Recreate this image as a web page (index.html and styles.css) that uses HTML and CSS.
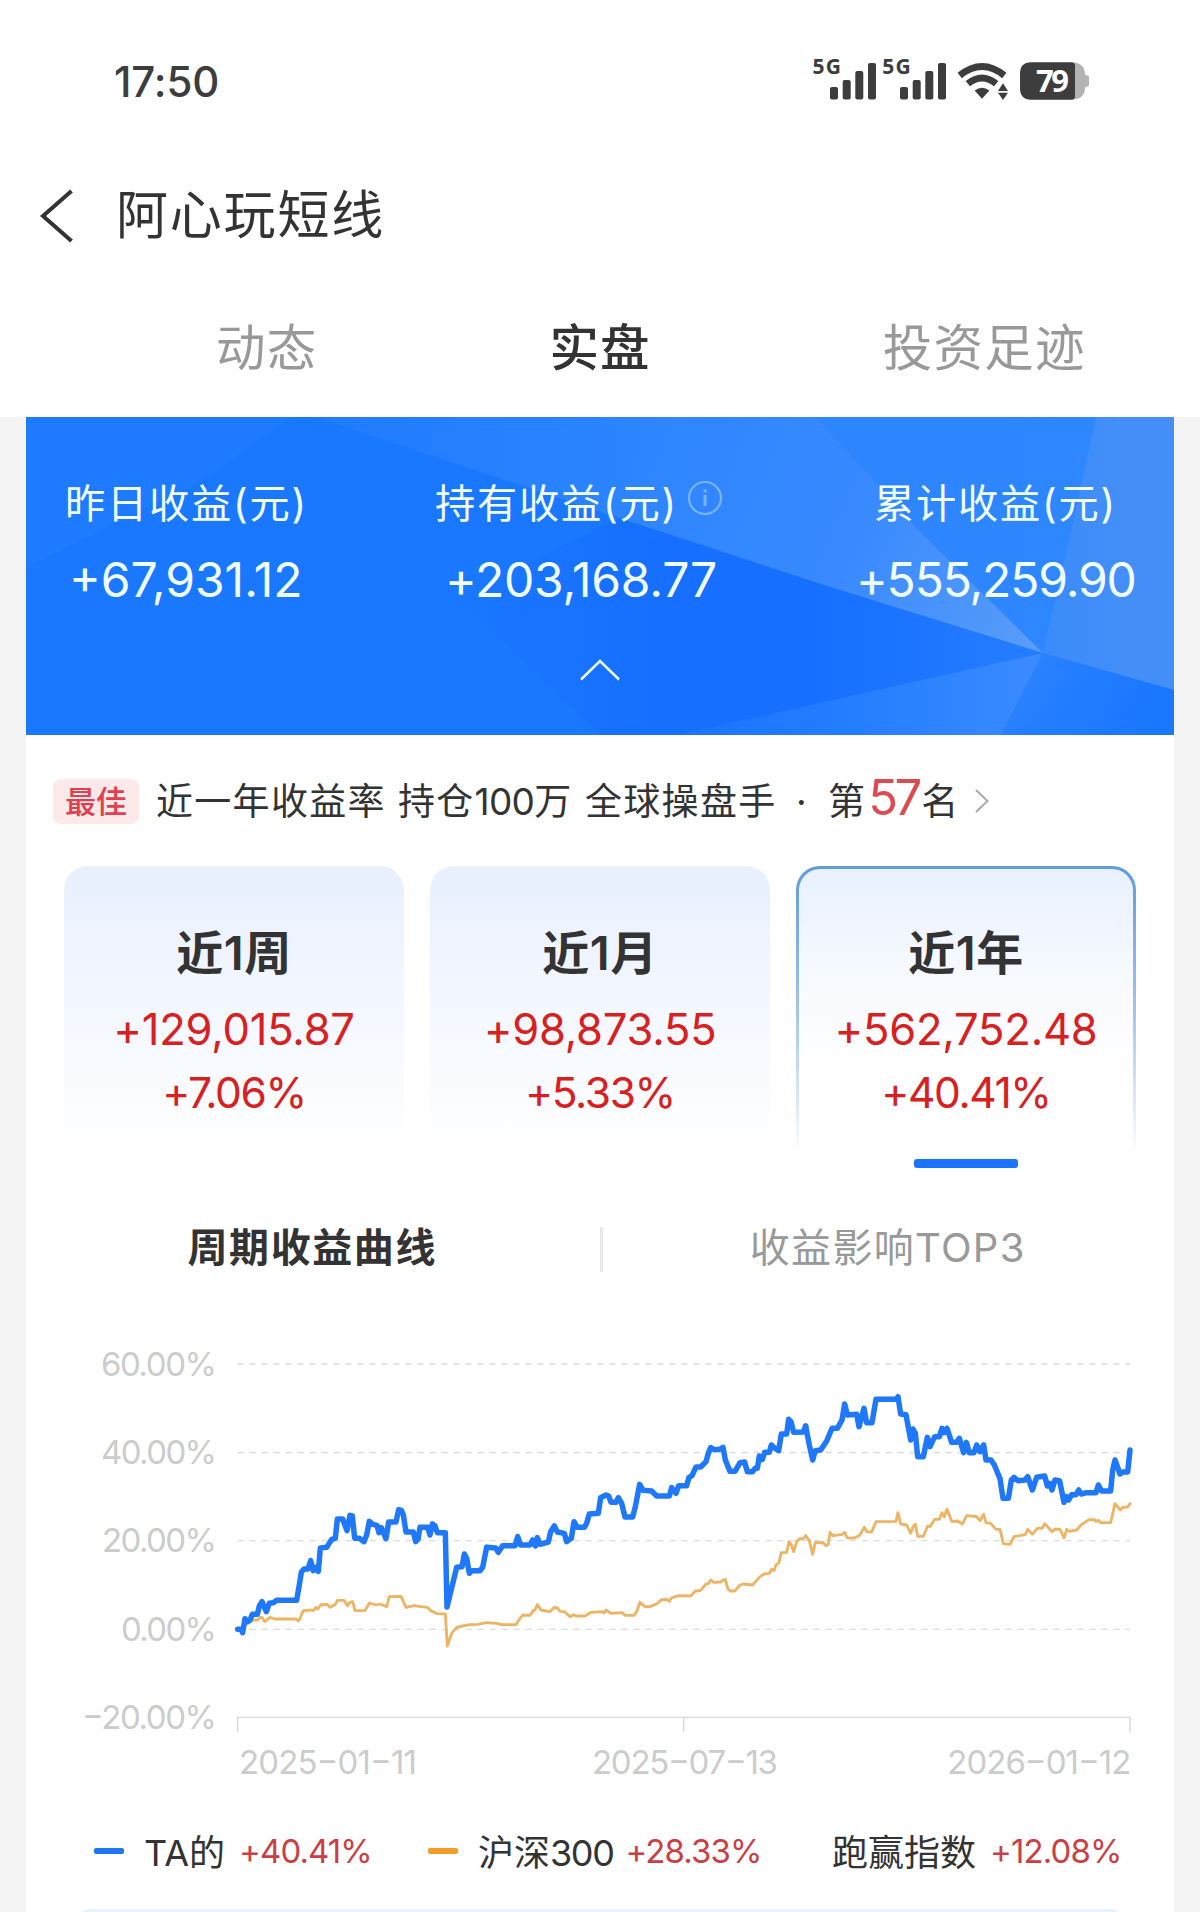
FILE: index.html
```html
<!DOCTYPE html>
<html lang="zh-CN">
<head>
<meta charset="utf-8">
<title>阿心玩短线</title>
<link rel="stylesheet" href="styles.css">
</head>
<body>
<header class="top">
  <div class="status">
    <span class="clock">17:50</span>
    <svg class="status-icons" width="284" height="62" viewBox="810 46 284 62">
      <g fill="#3d3d3d">
        <text class="net" x="812.5" y="74" textLength="28.5">5G</text>
        <rect x="830" y="87" width="8" height="12.4" rx="2"/><rect x="842.7" y="80" width="8" height="19.4" rx="2"/><rect x="855.3" y="71" width="8" height="28.4" rx="2"/><rect x="868" y="63" width="8" height="36.4" rx="2"/>
        <text class="net" x="882.3" y="74" textLength="28.5">5G</text>
        <rect x="900" y="87" width="8" height="12.4" rx="2"/><rect x="912.7" y="80" width="8" height="19.4" rx="2"/><rect x="925.3" y="71" width="8" height="28.4" rx="2"/><rect x="938" y="63" width="8" height="36.4" rx="2"/>
        <path d="M982 98.7 974.6 90.6Q982 84.800 989.4 90.600Z"/>
        <path d="M998 91 1003 83.300 1008 91ZM998 92.800 1003 100 1008 92.800Z"/>
        <path d="M1031 62.300H1072Q1075 62.300 1075 65V97Q1075 99.700 1072 99.700H1031Q1020 99.700 1020 88V74Q1020 62.300 1031 62.300Z"/>
      </g>
      <g fill="none" stroke="#3d3d3d" stroke-width="6.800">
        <path d="M959.700 75.500Q982 57.500 1004.300 75.500"/>
        <path d="M967.800 83.700Q982 72.300 996.200 83.700"/>
      </g>
      <path fill="#b3b3b3" d="M1072 62.300Q1085 63 1085 74.500L1089 76.500V85.500L1085 87.500Q1085 99 1072 99.700Q1075 99.700 1075 97V65Q1075 62.300 1072 62.300Z"/>
      <text class="batt" x="1036" y="92" textLength="33">79</text>
    </svg>
  </div>
  <div class="titlebar">
    <svg class="back" width="36" height="54" viewBox="0 0 36 54"><path d="M33.500 2 5 27 33.500 52" fill="none" stroke="#333" stroke-width="4"/></svg>
    <h1 class="title">阿心玩短线</h1>
  </div>
  <nav class="tabs">
    <span class="tab">动态</span><span class="tab tab-on">实盘</span><span class="tab">投资足迹</span>
  </nav>
</header>
<main class="page">
  <section class="hero">
    <svg class="facets" width="1148" height="318" viewBox="0 0 1148 318">
      <defs>
        <linearGradient id="up" gradientUnits="userSpaceOnUse" x1="270" y1="0" x2="1148" y2="0"><stop offset="0" stop-color="#1f7bff"/><stop offset=".4" stop-color="#2d85ff"/><stop offset="1" stop-color="#2e87ff"/></linearGradient>
        <linearGradient id="beam" gradientUnits="userSpaceOnUse" x1="600" y1="40" x2="1017" y2="236"><stop offset="0" stop-color="#3b8aff" stop-opacity="0"/><stop offset=".5" stop-color="#3b8aff" stop-opacity=".8"/><stop offset="1" stop-color="#5c9ef8"/></linearGradient>
        <linearGradient id="right" gradientUnits="userSpaceOnUse" x1="1020" y1="0" x2="1100" y2="0"><stop offset="0" stop-color="#3a8bfb"/><stop offset="1" stop-color="#448ff7"/></linearGradient>
        <linearGradient id="deep" gradientUnits="userSpaceOnUse" x1="430" y1="0" x2="1017" y2="0"><stop offset="0" stop-color="#1a77ff"/><stop offset=".35" stop-color="#166fff"/><stop offset=".6" stop-color="#166fff"/><stop offset="1" stop-color="#257dff"/></linearGradient>
        <linearGradient id="low" gradientUnits="userSpaceOnUse" x1="650" y1="0" x2="1010" y2="0"><stop offset="0" stop-color="#1b73ff"/><stop offset=".5" stop-color="#257dff"/><stop offset="1" stop-color="#3b8bff"/></linearGradient>
        <linearGradient id="corner" gradientUnits="userSpaceOnUse" x1="980" y1="236" x2="1110" y2="318"><stop offset="0" stop-color="#3386ff"/><stop offset=".4" stop-color="#247eff"/><stop offset="1" stop-color="#1a77ff"/></linearGradient>
      </defs>
      <rect width="1148" height="318" fill="#1a78ff"/>
      <path fill="#1e7bff" d="M0 0H265L175 65 0 150Z"/>
      <path fill="url(#up)" d="M290 0H1148V273L1017 236 804 170 593 101Z"/>
      <path fill="url(#beam)" d="M560 0H790L895 116 1017 236 804 170 593 101Z"/>
      <path fill="url(#right)" d="M1070 0H1148V273L1017 236 1046 110Z"/>
      <path fill="url(#deep)" d="M430 180 593 101 804 170 1017 236 651 318H575Z"/>
      <path fill="url(#low)" d="M651 318 1017 236 975 318Z"/>
      <path fill="url(#corner)" d="M975 318 1017 236 1148 273V318Z"/>
    </svg>
    <div class="sums">
      <div class="sum s1"><div class="sum-name">昨日收益(元)</div><div class="sum-val">+67,931.12</div></div>
      <div class="sum s2"><div class="sum-name">持有收益(元)<svg class="info" width="36" height="36" viewBox="0 0 36 36"><g fill="none" stroke="#78b4ff" stroke-width="2.200"><circle cx="18" cy="18" r="16"/><path d="M18 15V26M18 9.500V12.500" stroke-width="3"/></g></svg></div><div class="sum-val">+203,168.77</div></div>
      <div class="sum s3"><div class="sum-name">累计收益(元)</div><div class="sum-val">+555,259.90</div></div>
    </div>
    <svg class="fold" width="42" height="24" viewBox="0 0 42 24"><path d="M2 21.500 21 3 40 21.500" fill="none" stroke="#eaffff" stroke-width="2.500"/></svg>
  </section>
  <section class="rank">
    <span class="badge">最佳</span>
    <span class="rank-a">近一年收益率</span><span class="rank-b">持仓<span class="tight">100</span>万</span><span class="rank-c">全球操盘手</span><span class="dot">·</span><span class="rank-d">第</span><span class="rank-no">57</span><span class="rank-e">名</span>
    <svg class="more" width="16" height="26" viewBox="0 0 16 26"><path d="M2 2 13.500 13 2 24" fill="none" stroke="#aaa" stroke-width="2"/></svg>
  </section>
  <section class="cards">
    <div class="card"><div class="card-t">近1周</div><div class="card-v">+129,015.87</div><div class="card-p">+7.06%</div></div>
    <div class="card"><div class="card-t">近1月</div><div class="card-v">+98,873.55</div><div class="card-p">+5.33%</div></div>
    <div class="card card-on"><div class="card-t">近1年</div><div class="card-v">+562,752.48</div><div class="card-p">+40.41%</div></div>
  </section>
  <nav class="subtabs">
    <span class="sub sub-on">周期收益曲线</span><i class="sep"></i><span class="sub">收益影响TOP3</span>
  </nav>
  <section class="chart">
    <svg width="1148" height="460" viewBox="-102 0 3444 1380">
      <g stroke="#dcdcdc" stroke-width="4" stroke-dasharray="18 18">
        <path d="M533 102H3210M533 367.500H3210M533 632H3210M533 898H3210"/>
      </g>
      <path d="M533 1207V1162H3210V1207M1871 1162V1207" fill="none" stroke="#d8d8d8" stroke-width="4"/>
      <g class="axis" text-anchor="end">
        <text x="471" y="137" textLength="348">60.00%</text>
        <text x="471" y="402" textLength="348">40.00%</text>
        <text x="471" y="666" textLength="345">20.00%</text>
        <text x="471" y="932" textLength="288">0.00%</text>
        <text x="471" y="1196" textLength="405">−20.00%</text>
      </g>
      <g class="axis">
        <text x="537" y="1331" textLength="534">2025−01−11</text>
        <text x="1596" y="1331" textLength="558">2025−07−13</text>
        <text x="2662" y="1331" textLength="552">2026−01−12</text>
      </g>
      <g fill="none" stroke="#ecb464" stroke-width="8.500" stroke-linejoin="round" stroke-linecap="round">
        <polyline points="533,898 548,895 560,880 580,870 593,870 600,862 606,862 614,875 630,862 645,867 708,867 716,873 730,842 752,840 760,842 768,832 773,837 783,824 802,823 810,832 825,824 833,811 852,811 862,827 870,817 878,815 885,842 915,842 928,819 948,825 960,822 980,830 988,800 1023,799 1038,832 1062,827 1082,830 1102,832 1112,842 1132,851 1156,852 1162,948 1175,910 1190,892 1208,888 1230,884 1255,883 1278,878 1310,880 1325,884"/>
        <polyline transform="translate(1200)" points="125,884 168,884 178,868 188,855 210,856 220,842 225,840 232,824 243,840 270,845 283,832 292,834 300,844 313,845 330,860 342,854 350,858 375,858 392,847 428,845 432,849 438,840 453,850 487,848 495,856 522,856 530,845 540,817 555,830 570,830 590,822 605,809 620,808 628,814 634,804 655,797 692,798 706,783 722,781 738,762 746,760 752,750 762,757 780,756 796,748 804,778 812,783 824,783 840,765 850,762 878,765 900,740 912,732 928,730 935,718 942,722 948,705 957,698 964,668 980,667 987,635 994,645 1001,665 1010,635 1018,627 1032,625 1037,617"/>
        <polyline transform="translate(2190)" points="47,617 58,632 68,673 76,638 98,637 108,647 115,643 120,607 128,617 157,613 164,607 172,624 192,624 208,617 223,592 230,605 245,606 258,575 318,574 324,548 332,582 350,585 362,610 369,590 376,583 383,619 400,619 413,588 420,590 434,568 448,568 456,548 463,560 471,537 485,574 503,573 517,582 530,557 560,560 570,572 581,553 588,578 602,580 618,598 630,598 640,641 660,643 672,620 706,614 713,598 727,613 742,595 757,594 764,581 786,605 795,597 810,598 822,624 830,598 838,604 860,600 873,585 897,569 912,569 918,574 925,571 932,578 962,578 975,521 991,540 998,532 1013,531 1020,521"/>
      </g>
      <g fill="none" stroke="#1f78fa" stroke-width="16.500" stroke-linejoin="round" stroke-linecap="round">
        <polyline points="533,898 543,898 548,908 555,866 563,875 570,870 577,853 592,853 598,828 606,815 619,845 628,820 640,818 650,811 710,811 717,770 724,727 732,717 744,717 752,692 760,722 768,712 775,724 781,654 800,652 815,628 826,625 832,567 848,567 861,602 870,556 877,558 884,625 898,625 912,635 920,615 928,574 938,583 951,586 957,608 964,593 978,626 986,576 1008,576 1016,539 1024,541 1030,555 1038,606 1060,606 1067,635 1074,628 1080,592 1103,592 1110,615 1117,582 1125,588 1132,608 1156,608 1161,831 1171,790 1190,712 1206,710 1213,672 1220,685 1228,730 1235,722 1260,722 1268,712 1280,652"/>
        <polyline transform="translate(1200)" points="80,652 107,654 115,667 128,647 165,647 173,620 182,645 210,645 218,630 226,648 232,623 240,643 265,636 272,605 283,588 292,606 313,610 320,635 328,628 334,625 342,575 352,592 373,592 380,580 388,552 415,550 422,503 438,495 446,498 453,517 468,517 475,503 485,520 495,561 518,561 526,530 539,463 549,481 575,483 590,498 628,498 635,473 648,490 656,467 680,467 687,442 696,437 708,411 722,411 738,395 745,370 752,353 762,359 780,358 789,352 796,390 810,424 825,424 840,398 854,396 862,425 878,425 885,415 892,415 898,378 907,388 914,367 928,367 934,345 942,353 956,362 964,312 980,312 986,268 993,275 1001,307 1030,306 1037,288"/>
        <polyline transform="translate(2190)" points="47,288 58,345 68,390 76,362 92,360 110,333 126,295 142,295 156,270 164,222 172,255 200,253 207,290 222,235 230,278 246,278 258,208 320,208 324,200 332,252 348,254 362,330 369,297 376,310 383,380 400,380 412,322 420,350 434,320 448,320 456,295 463,308 471,295 485,337 500,337 508,325 521,368 529,337 538,368 552,368 560,345 570,365 581,345 588,390 603,390 613,405 630,446 639,505 655,505 664,450 672,442 684,452 705,450 713,440 727,480 740,442 764,438 772,468 779,460 786,480 795,450 809,453 822,517 830,500 836,510 845,494 858,494 866,480 874,492 890,488 918,488 925,465 935,483 962,483 968,420 975,390 990,432 998,426 1013,426 1020,360"/>
      </g>
    </svg>
  </section>
  <section class="legend">
    <span class="item i1"><i class="key key-blue"></i><span class="name">TA的</span><span class="pct">+40.41%</span></span>
    <span class="item i2"><i class="key key-gold"></i><span class="name">沪深<span class="tight">300</span></span><span class="pct">+28.33%</span></span>
    <span class="item i3"><span class="name">跑赢指数</span><span class="pct">+12.08%</span></span>
  </section>
  <section class="next"></section>
</main>
</body>
</html>
```
FILE: styles.css
```css
* { box-sizing: border-box; margin: 0; padding: 0; }
body {
  width: 1200px; height: 1912px; overflow: hidden; background: #f4f4f4; color: #333;
  font-family: Inter, "Noto Sans CJK SC", sans-serif; white-space: nowrap;
}
svg { display: block; flex: none; }
i { display: block; flex: none; }

.top { height: 417px; background: #fff; }
.status { display: flex; justify-content: space-between; padding: 46px 106px 0 114px; height: 160px; }
.clock { margin-top: 10px; font-size: 42px; line-height: 52px; font-weight: 500; color: #3d3d3d; letter-spacing: -.1px; }
.net { font: 700 21px "Noto Sans", sans-serif; }
.batt { font: 700 31px "Noto Sans", sans-serif; fill: #fff; }
.titlebar { display: flex; align-items: center; height: 112px; padding-left: 38px; gap: 42px; }
.title { font-size: 52px; font-weight: 400; letter-spacing: 1.800px; line-height: 76px; }
.tabs { display: flex; gap: 232px; padding: 40px 0 0 216px; }
.tab { font-size: 49.500px; line-height: 72px; letter-spacing: 1.200px; color: #999; }
.tab-on { color: #333; font-weight: 500; }

.page { margin: 0 26px; height: 1495px; background: #fff; overflow: hidden; }
.hero { position: relative; height: 318px; color: #f0ffff; overflow: hidden; }
.facets { position: absolute; left: 0; top: 0; }
.sums { position: relative; display: flex; height: 240px; padding-top: 55px; }
.sum-name { display: flex; align-items: center; height: 56px; font-size: 40.200px; letter-spacing: 1.800px; }
.sum-val { height: 64px; margin-top: 20px; line-height: 64px; font-size: 48px; }
.s1 { width: 369px; padding-left: 39px; }
.s1 .sum-val { padding-left: 4px; }
.s2 { width: 440px; padding-left: 40px; }
.s2 .sum-val { padding-left: 10px; letter-spacing: -.200px; }
.s3 { padding-left: 39px; }
.s3 .sum-val { margin-left: -18px; letter-spacing: -1.150px; }
.info { margin: -4px 0 0 9px; }
.fold { position: relative; margin: 1px auto 0; }

.rank { display: flex; align-items: center; height: 131px; padding: 2px 0 0 27px; font-size: 37px; line-height: 56px; letter-spacing: 1.300px; }
.badge { width: 86px; height: 45px; border-radius: 8px; background: #fce9ea; color: #e0404f; font-size: 31px; line-height: 45px; font-weight: 500; letter-spacing: 0; text-align: center; margin-right: 17px; }
.rank-a { width: 242px; }
.rank-b { width: 187px; }
.rank-b .tight { letter-spacing: -.700px; }
.rank-c { width: 211px; }
.dot { width: 32px; }
.rank-no { width: 55px; padding-left: 2px; font-size: 49px; color: #dd4b50; letter-spacing: -3.500px; margin-top: -8px; }
.more { margin: -2px 0 0 14px; }

.cards { display: flex; gap: 26px; padding-left: 38px; height: 302px; }
.card { position: relative; width: 340px; height: 300px; padding-top: 54px; border-radius: 24px; background: linear-gradient(#e8f0fe, #f3f7ff 45%, #fff 95%); text-align: center; }
.card-t { font-size: 47px; line-height: 66px; font-weight: 600; letter-spacing: .500px; }
.card-v { margin-top: 12px; font-size: 43.500px; line-height: 62px; color: #d82020; letter-spacing: -.200px; }
.card-p { font-size: 42.500px; line-height: 66px; color: #d82020; letter-spacing: -1.400px; }
.card-on { background: linear-gradient(#e8f1ff, #f8faff 40%, #fff 70%) padding-box, linear-gradient(#5f9bdc, #9fc0ea 45%, #fff 97%) border-box; border: 3px solid transparent; padding-top: 51px; }
.card-on::after { content: ""; position: absolute; left: 115px; top: 290px; width: 104px; height: 9px; border-radius: 3px; background: #1a74ff; }

.subtabs { display: flex; align-items: center; height: 160px; margin-top: 2px; padding: 0 0 10px; }
.sub { width: 574px; text-align: center; font-size: 40px; letter-spacing: 1.300px; color: #999; }
.sub-on { font-weight: 600; color: #333; letter-spacing: 1.600px; }
.sep { width: 3px; height: 45px; margin: 9px -1px 0 1px; background: #e8e8e8; }

.axis text { font-size: 99px; fill: #ccc; }
.legend { display: flex; height: 119px; padding: 36px 0 0 68px; }
.item { display: flex; align-items: center; height: 50px; }
.i1 { width: 334px; }
.i2 { width: 404px; }
.key { width: 30px; height: 6px; border-radius: 2px; margin-right: 20px; }
.key-blue { background: #2277f0; }
.key-gold { background: #f29d29; }
.name { font-size: 36px; margin-top: -2px; }
.name .tight { letter-spacing: -1.400px; }
.pct { font-size: 33px; color: #cb3f44; margin-left: 14px; letter-spacing: -.900px; }
.i2 .pct { margin-left: 12px; }
.next { height: 20px; margin: 0 50px; border-radius: 14px 14px 0 0; background: #e8f1fd; }
```
